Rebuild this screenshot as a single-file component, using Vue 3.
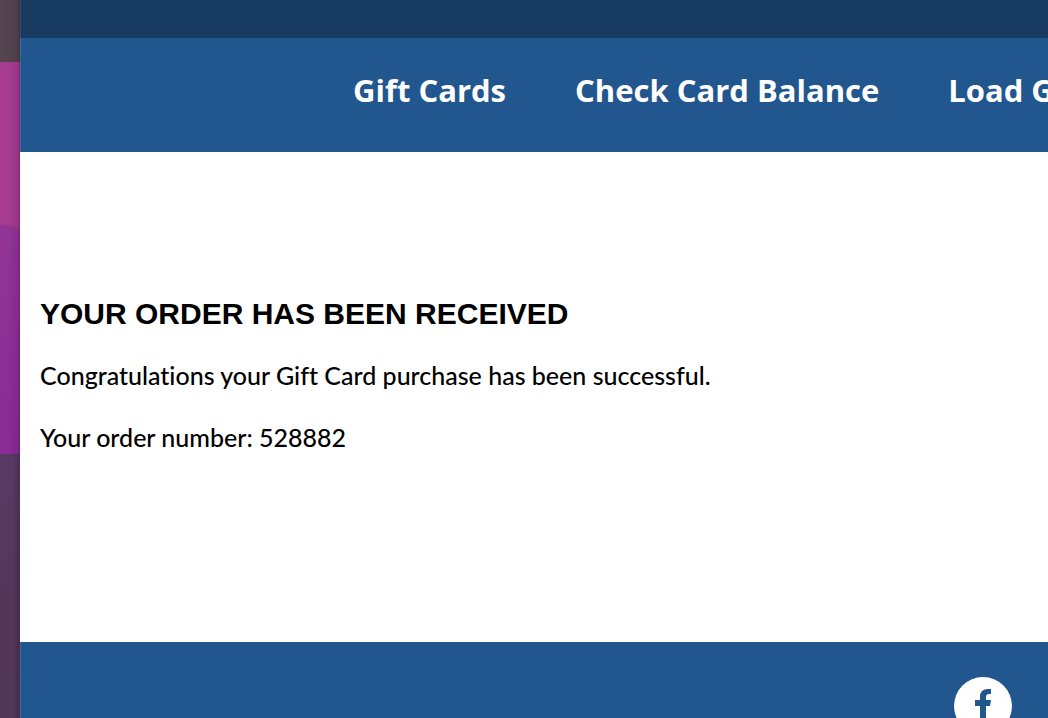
<script setup>
const links = ['Gift Cards', 'Check Card Balance', 'Load G']
const orderNumber = '528882'
</script>

<template>
  <div class="desktop">
    <div class="wallpaper" aria-hidden="true">
      <div class="shade shade-top"></div>
      <div class="glow">
        <svg viewBox="0 0 20 392" preserveAspectRatio="none">
          <defs>
            <linearGradient id="pink" x1="0" y1="0" x2="0" y2="1">
              <stop offset="0" stop-color="#a83b90" />
              <stop offset="1" stop-color="#a73b8c" />
            </linearGradient>
            <linearGradient id="violet" x1="0" y1="0" x2="0" y2="1">
              <stop offset="0" stop-color="#923596" />
              <stop offset="1" stop-color="#8a2a96" />
            </linearGradient>
          </defs>
          <rect width="20" height="392" fill="url(#pink)" />
          <path d="M0 162 Q10 163 20 167 V392 H0 Z" fill="url(#violet)" />
        </svg>
      </div>
      <div class="shade shade-bottom"></div>
    </div>
    <div class="window">
      <div class="topbar"></div>
      <nav class="nav" aria-label="Main">
        <a v-for="link in links" :key="link" href="#">{{ link }}</a>
      </nav>
      <main class="content">
        <h1>YOUR ORDER HAS BEEN RECEIVED</h1>
        <p>Congratulations your Gift Card purchase has been successful.</p>
        <p>Your order number: {{ orderNumber }}</p>
      </main>
      <footer class="footer">
        <a class="social" href="#" aria-label="Facebook">
          <svg viewBox="0 0 60 60" width="60" height="60">
            <circle cx="30" cy="30" r="29" fill="#fff" />
            <path d="M38 13 H35 Q27 13 27 21 V24 H22 V30 H27 V48 H33 V30 H37 L38 24 H33 V21 Q33 18 36 18 H38 Z" fill="#22568e" />
          </svg>
        </a>
      </footer>
    </div>
  </div>
</template>

<style>
body {
  margin: 0;
}
</style>

<style scoped>
.desktop {
  display: flex;
  height: 100vh;
  overflow: hidden;
  background: #fff;
}

.wallpaper {
  display: flex;
  flex: 0 0 20px;
  flex-direction: column;
}

.shade-top {
  height: 62px;
  background: linear-gradient(90deg, #54454e, #50404b 80%, #44343f);
}

.glow {
  position: relative;
  height: 392px;
}

.glow svg {
  display: block;
  width: 100%;
  height: 100%;
}

.glow::after {
  content: '';
  position: absolute;
  inset: 0;
  background: linear-gradient(90deg, rgba(40, 10, 50, 0) 40%, rgba(40, 10, 50, 0.12) 90%, rgba(40, 10, 50, 0.35));
}

.shade-bottom {
  flex: 1;
  background:
    linear-gradient(90deg, rgba(30, 10, 40, 0) 60%, rgba(30, 10, 40, 0.25)),
    linear-gradient(#583a64, #543658 60%, #503858);
}

.window {
  display: flex;
  flex: 1;
  flex-direction: column;
  min-width: 0;
  overflow: hidden;
}

.topbar {
  flex: none;
  height: 38px;
  background: #183b62;
  border-left: 1px solid #2e4f74;
}

.nav {
  display: flex;
  flex: none;
  gap: 69px;
  padding: 32px 0 42px 332px;
  background: #22568e;
  border-left: 1px solid #3d6b9c;
  font: 700 31px/40px "Open Sans", sans-serif;
}

.nav a {
  flex: none;
  color: #fff;
  text-decoration: none;
  white-space: nowrap;
}

.content {
  flex: 1 0 auto;
  padding: 146px 20px 0;
  color: #000;
}

h1 {
  margin: 0;
  font: 700 30px/32px "Liberation Sans", Arial, sans-serif;
}

p {
  margin: 28px 0 0;
  font: 500 25px/34px Lato, sans-serif;
  font-variant-ligatures: no-common-ligatures;
}

.footer {
  display: flex;
  flex: none;
  justify-content: flex-end;
  height: 42px;
  padding: 34px 35px 0 0;
  overflow: hidden;
  background: #22568e;
  border-left: 1px solid #3d6b9c;
}

.social {
  display: block;
  height: 60px;
}

.social svg {
  display: block;
}
</style>
